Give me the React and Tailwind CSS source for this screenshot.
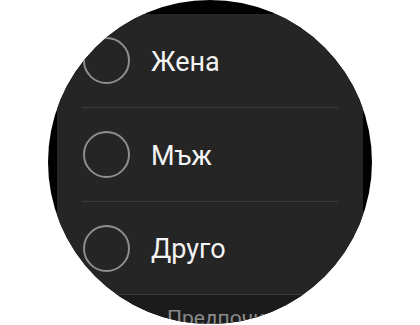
export default function App() {
  const items = [
    { label: "Жена", h: "h-[94px]" },
    { label: "Мъж", h: "h-[94px]" },
    { label: "Друго", h: "h-[93px]" },
  ];
  return (
    <div className="w-[420px] h-[325px] bg-white flex justify-center overflow-hidden" style={{ fontFamily: "Roboto, 'Noto Sans', sans-serif" }}>
      <div className="w-[324px] h-[324px] rounded-full overflow-hidden bg-black pt-[14px] px-[9px]">
        <div className="bg-[#252525] flex flex-col">
          {items.map((it) => (
            <div key={it.label} className={`${it.h} mx-[25px] border-b border-[#3a3a3a] flex items-center`}>
              <div className="w-[47px] h-[47px] ml-px rounded-full border-2 border-[#8e8e8e] shrink-0" />
              <span className="ml-[21px] pt-[3px] text-[27px] leading-none text-[#f4f4f4]">{it.label}</span>
            </div>
          ))}
        </div>
        <div className="bg-[#1b1b1b] h-[40px] pl-[110px] pt-[11px]">
          <span className="text-[21px] leading-[24px] text-[#8a8a8a] whitespace-nowrap">Предпочитам да не казвам</span>
        </div>
      </div>
    </div>
  );
}
